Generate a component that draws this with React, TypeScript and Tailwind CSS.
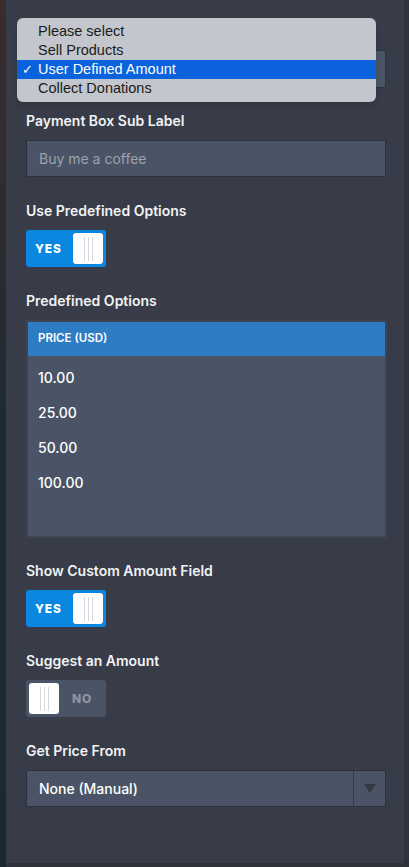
import React from 'react'

const font = { fontFamily: 'Inter, "Liberation Sans", Arial, sans-serif' }

function Label({ children }: { children?: React.ReactNode }) {
  return (
    <div className="mb-[9px] h-[20px] text-[14px] leading-[20px] font-semibold text-[#f1f2f4]">
      {children}
    </div>
  )
}

function Grip() {
  return (
    <div className="flex h-full items-center justify-center gap-[3px]">
      <span className="h-[24px] w-px bg-[#d5d8dc]" />
      <span className="h-[24px] w-px bg-[#d5d8dc]" />
      <span className="h-[24px] w-px bg-[#d5d8dc]" />
    </div>
  )
}

function Toggle({ on }: { on: boolean }) {
  if (on) {
    return (
      <div className="flex h-[37px] w-[80px] items-center justify-between rounded-[3px] bg-[#0a88e0] pr-[3px] pl-[9px]">
        <span className="text-[12px] font-extrabold tracking-[0.8px] text-white">YES</span>
        <div className="h-[31px] w-[30px] rounded-[3px] bg-white">
          <Grip />
        </div>
      </div>
    )
  }
  return (
    <div className="flex h-[37px] w-[80px] items-center rounded-[3px] bg-[#4a5466] pl-[3px]">
      <div className="h-[31px] w-[30px] rounded-[3px] bg-white">
        <Grip />
      </div>
      <span className="ml-[13px] text-[12px] font-extrabold tracking-[0.8px] text-[#8b95a3]">NO</span>
    </div>
  )
}

const menu = ['Please select', 'Sell Products', 'User Defined Amount', 'Collect Donations']
const prices = ['10.00', '25.00', '50.00', '100.00']

export default function App() {
  return (
    <div className="relative flex h-[867px] w-[409px] overflow-hidden bg-[#2f333c]" style={font}>
      <div className="h-full w-[6px] bg-gradient-to-b from-[#3b2c2c] via-[#1d2a32] to-[#1a2831]" />
      <div className="h-[863px] w-[398px] bg-[#383c48] pt-[21px] pr-[18px] pl-[20px]">
        {/* payment type select, covered by the open menu */}
        <div className="mb-[23px]">
          <Label />
          <div className="h-[38px] rounded-[2px] border border-[#2f3440] bg-[#4a5466]" />
        </div>

        <div className="mb-[24px]">
          <Label>Payment Box Sub Label</Label>
          <div className="flex h-[37px] items-center border border-[#2c313b] bg-[#4a5466] px-[12px] text-[14px] text-[#9ba2ad]">
            Buy me a coffee
          </div>
        </div>

        <div className="mb-[24px]">
          <Label>Use Predefined Options</Label>
          <Toggle on />
        </div>

        <div className="mb-[23px]">
          <Label>Predefined Options</Label>
          <div className="h-[218px] w-[361px] border-2 border-[#3e4452] bg-[#4a5466]">
            <div className="flex h-[34px] items-center bg-[#2d7cc4] px-[10px] text-[11.5px] font-semibold text-white">
              PRICE (USD)
            </div>
            <div className="pt-[4px]">
              {prices.map((p) => (
                <div key={p} className="flex h-[35px] items-center px-[10px] text-[14px] font-medium text-white">
                  {p}
                </div>
              ))}
            </div>
          </div>
        </div>

        <div className="mb-[24px]">
          <Label>Show Custom Amount Field</Label>
          <Toggle on />
        </div>

        <div className="mb-[24px]">
          <Label>Suggest an Amount</Label>
          <Toggle on={false} />
        </div>

        <div>
          <Label>Get Price From</Label>
          <div className="flex h-[37px] border border-[#2c313b] bg-[#4a5466]">
            <div className="flex flex-1 items-center px-[12px] text-[14px] font-medium text-white">
              None (Manual)
            </div>
            <div className="flex w-[32px] items-center justify-center border-l border-[#353a45]">
              <svg width="12" height="9" viewBox="0 0 12 9">
                <path d="M0 0 L12 0 L6 9 Z" fill="#343944" />
              </svg>
            </div>
          </div>
        </div>
      </div>

      <div className="absolute top-[18px] left-[17px] w-[359px] rounded-[6px] bg-[#c3c6cc] py-[4px] shadow-md">
        {menu.map((m) => {
          const sel = m === 'User Defined Amount'
          return (
            <div
              key={m}
              className={
                'relative flex h-[19px] items-center pl-[21px] text-[14.5px] ' +
                (sel ? 'bg-[#0a63dc] text-white' : 'text-[#1b1b1b]')
              }
              style={{ fontFamily: '"Liberation Sans", Arial, sans-serif' }}
            >
              {sel && <span className="absolute left-[5px] text-[13px]">✓</span>}
              {m}
            </div>
          )
        })}
      </div>
    </div>
  )
}
